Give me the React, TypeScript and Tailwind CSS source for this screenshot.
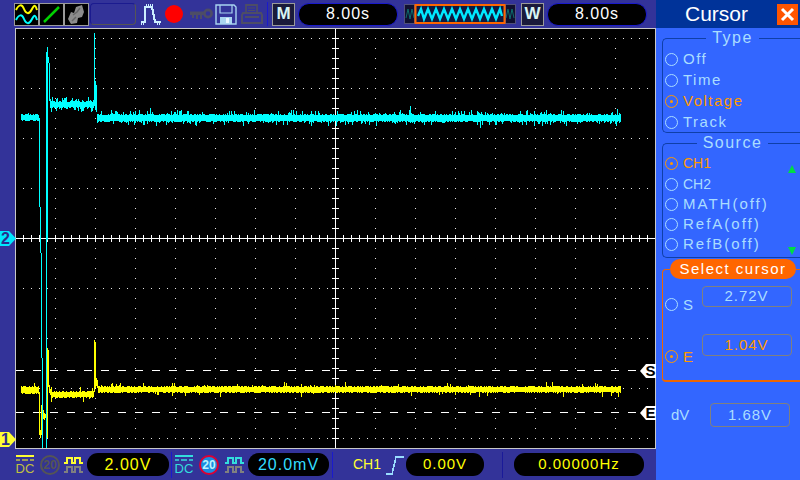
const sans = "font-['Liberation_Sans',Arial,sans-serif]";

// small seeded generator so the trace noise stays the same between renders
function makeRandom(seed: number) {
  let s = seed;
  return () => {
    s = (s * 1664525 + 1013904223) % 4294967296;
    return s / 4294967296;
  };
}

function noiseBand(x0: number, x1: number, top: number, bottom: number, spikes: number, seed: number) {
  const rand = makeRandom(seed);
  let d = '';
  for (let x = x0; x <= x1; x++) {
    let a = top + Math.floor(rand() * 2);
    let b = bottom - Math.floor(rand() * 2);
    if (rand() < spikes) a -= 1 + Math.floor(rand() * 4);
    if (rand() < spikes) b += 1 + Math.floor(rand() * 4);
    d += `M${x + 0.5} ${a}V${b}`;
  }
  return d;
}

const cyanPath =
  noiseBand(21, 38, 114, 121, 0.12, 7) +
  'M39.5 118V207M40.5 207V253M41.5 253V358M42.5 358V448M46.5 52V448M47.5 47V240M48.5 57V63M49.5 63V101' +
  noiseBand(50, 93, 101, 108, 0.35, 21) +
  'M94.5 33V106M95.5 81V110M96.5 85V112' +
  noiseBand(97, 620, 114, 122, 0.22, 93) +
  'M150.5 108V116M410.5 106V116M480.5 118V128M617.5 109V118';

const yellowPath =
  noiseBand(21, 38, 386, 394, 0.04, 5) +
  'M39.5 392V435M40.5 430V438M41.5 405V435M42.5 409V419M43.5 410V419M44.5 413V420M45.5 414V418M47.5 348V438M48.5 350V387M49.5 385V393M50.5 389V395' +
  noiseBand(51, 93, 391, 398, 0.08, 31) +
  'M94.5 340V392M95.5 342V388M96.5 378V386M97.5 380V388' +
  noiseBand(98, 620, 386, 393, 0.06, 57);

function gridDots() {
  const out: { x: number; y: number }[] = [];
  for (let y = 38; y <= 438; y += 50) {
    for (let x = 23; x < 655; x += 8) {
      if ((x - 335) % 40 !== 0 && y !== 238) out.push({ x, y });
    }
  }
  for (let x = 55; x < 655; x += 40) {
    for (let y = 38; y <= 448; y += 10) {
      if (x !== 335) out.push({ x, y });
    }
  }
  return out;
}

function Screen() {
  const ticks = [];
  for (let x = 23; x < 655; x += 8) ticks.push(x);
  const vticks = [];
  for (let y = 38; y < 448; y += 10) vticks.push(y);
  return (
    <svg viewBox="16 29 639 419" className="block w-[639px] h-[419px]" shapeRendering="crispEdges">
      <rect x="16" y="29" width="639" height="419" fill="#000" />
      {gridDots().map((p, i) => (
        <rect key={i} x={p.x} y={p.y} width="1" height="1" fill="#e8e8e8" />
      ))}
      <path d="M16 238.5H655M335.5 29V448" stroke="#fff" strokeWidth="1" />
      {ticks.map((x) => (
        <path key={x} d={`M${x + 0.5} 235V242`} stroke="#fff" />
      ))}
      {vticks.map((y) => (
        <path key={y} d={`M332 ${y + 0.5}H339`} stroke="#fff" />
      ))}
      <path d="M16 370.5H655M16 412.5H655" stroke="#fff" strokeDasharray="8 9" />
      <path d={yellowPath} stroke="#ffff00" fill="none" />
      <path d={cyanPath} stroke="#00ffff" fill="none" />
    </svg>
  );
}

function LeftMarker({ top, label, color }: { top: string; label: string; color: string }) {
  return (
    <div className={`absolute left-0 ${top} w-[16px] h-[15px]`}>
      <svg viewBox="0 0 16 15" className="absolute inset-0 w-[16px] h-[15px]">
        <polygon points="0,0 9,0 16,7.5 9,15 0,15" fill={color} />
      </svg>
      <span className={`absolute left-0 top-0 w-[11px] text-center text-[16px] leading-[15px] font-bold text-[#2b2b8c] ${sans}`}>
        {label}
      </span>
    </div>
  );
}

function RightMarker({ top, label }: { top: string; label: string }) {
  return (
    <div className={`absolute left-[640px] ${top} w-[16px] h-[14px]`}>
      <svg viewBox="0 0 16 14" className="absolute inset-0 w-[16px] h-[14px]">
        <polygon points="0,7 6,0 16,0 16,14 6,14" fill="#fff" />
      </svg>
      <span className={`absolute left-[5px] top-0 w-[11px] text-center text-[15px] leading-[14px] font-bold text-black ${sans}`}>
        {label}
      </span>
    </div>
  );
}

function Pill({ className, text }: { className: string; text: string }) {
  return (
    <div className={`flex items-center justify-center rounded-[11px] bg-black ${sans} ${className}`}>
      {text}
    </div>
  );
}

function WaveIcon() {
  return (
    <svg viewBox="0 0 23 21" className="w-[23px] h-[21px]">
      <path d="M1 6C4 0 7 0 9 5S14 11 17 5 21 3 22 6" stroke="#ffff00" strokeWidth="2" fill="none" />
      <path d="M1 16C4 10 7 10 9 15S14 21 17 15 21 13 22 16" stroke="#00ffff" strokeWidth="2" fill="none" />
    </svg>
  );
}

function LineIcon() {
  return (
    <svg viewBox="0 0 23 21" className="w-[23px] h-[21px]">
      <path d="M4 18L19 3" stroke="#00d000" strokeWidth="2.5" />
    </svg>
  );
}

function BlobIcon() {
  return (
    <svg viewBox="0 0 23 21" className="w-[23px] h-[21px]">
      <path d="M3 15L6 8L9 9L11 3L17 1L19 8L17 13L13 14L12 19L6 20Z" fill="#8c8c8c" />
      <path d="M8 11L12 8L15 4M7 17L11 13" stroke="#666" strokeWidth="1.5" fill="none" />
    </svg>
  );
}

function IconBox({ children }: { children: React.ReactNode }) {
  return (
    <div className="flex h-[21px] w-[23px] items-center justify-center bg-black outline outline-1 outline-[#9a9a9a]">
      {children}
    </div>
  );
}

function TopBar() {
  return (
    <div className="flex h-[28px] items-center pl-[15px]">
      <div className="flex gap-[2px]">
        <IconBox><WaveIcon /></IconBox>
        <IconBox><LineIcon /></IconBox>
        <IconBox><BlobIcon /></IconBox>
      </div>
      <div className="ml-[2px] h-[22px] w-[46px] rounded-[4px] border border-[#1b1b8f] border-b-[#555] border-r-[#555]" />
      <svg viewBox="0 0 22 22" className="ml-[4px] h-[22px] w-[22px]" shapeRendering="crispEdges">
        <path d="M1 19H5V4H12L15 19H21" stroke="#cceeff" strokeWidth="2" fill="none" />
        <path d="M6 1V4M8 1V4M10 1V4M12 1V4M1 18V22M3 18V22M17 18V22M19 18V22" stroke="#cceeff" />
      </svg>
      <div className="ml-[3px] h-[18px] w-[18px] rounded-full bg-[#ff0000]" />
      <svg viewBox="0 0 23 12" className="ml-[7px] h-[12px] w-[23px]">
        <path d="M0 3.5H15V7H12V11H10V7H8V11H6V7H4V10H2V7H0Z" fill="#4d4d66" />
        <circle cx="18" cy="5.5" r="3.6" fill="none" stroke="#4d4d66" strokeWidth="2.6" />
      </svg>
      <svg viewBox="0 0 22 21" className="ml-[2px] h-[21px] w-[22px]">
        <path d="M1 1H19L21 3V20H1Z" fill="none" stroke="#a8d4f0" strokeWidth="1.4" />
        <path d="M5 1V9H17V1" fill="none" stroke="#a8d4f0" strokeWidth="1.2" />
        <rect x="5" y="13" width="12" height="7" fill="#a8d4f0" />
        <rect x="11" y="14" width="3" height="5" fill="#e8f6ff" />
      </svg>
      <svg viewBox="0 0 22 21" className="ml-[4px] h-[21px] w-[22px]">
        <path d="M5 9V1H16V9" fill="none" stroke="#4d4d66" strokeWidth="1.8" />
        <path d="M7 4H14M7 6.5H14" stroke="#4d4d66" strokeWidth="1.2" />
        <path d="M2 9H20L21 11V19H1V11Z" fill="none" stroke="#4d4d66" strokeWidth="2" />
        <path d="M4 13H18" stroke="#4d4d66" strokeWidth="2" />
      </svg>
      <div className="ml-[4px] h-[24px] w-[1px] bg-[#1a1acc]" />
      <div className={`ml-[5px] flex h-[21px] w-[21px] items-center justify-center bg-[#1a1a3a] text-[17px] font-bold text-[#d8f4f4] outline outline-1 outline-[#9a9a9a] ${sans}`}>
        M
      </div>
      <Pill className="ml-[4px] h-[23px] w-[100px] border border-[#1a1acc] text-[16px] tracking-[1px] text-white" text="8.00s" />
      <div className="ml-[6px] flex h-[20px] w-[112px] items-center bg-[#50507a]">
        <svg viewBox="0 0 112 20" className="h-[20px] w-[112px]">
          <rect x="1" y="1" width="9" height="18" fill="#101030" />
          <rect x="102" y="1" width="9" height="18" fill="#101030" />
          <path d="M2 14L4 5L6 15L8 5L10 14M102 14L104 5L106 15L108 5L110 14" stroke="#0c6c6c" fill="none" />
          <rect x="11.5" y="1" width="89" height="18" fill="#0e1a40" stroke="#ff6600" strokeWidth="2" />
          <path d="M14 12L17 5L20 15L24 5L28 15L32 5L36 15L40 5L44 15L48 5L52 15L56 5L60 15L64 5L68 15L72 5L76 15L80 5L84 15L88 5L92 15L96 5L98 12" stroke="#00e8ff" strokeWidth="2.4" fill="none" />
        </svg>
      </div>
      <div className={`ml-[6px] flex h-[21px] w-[21px] items-center justify-center bg-[#1a1a3a] text-[17px] font-bold text-[#d8f4f4] outline outline-1 outline-[#9a9a9a] ${sans}`}>
        W
      </div>
      <Pill className="ml-[4px] h-[23px] w-[100px] border border-[#1a1acc] text-[16px] tracking-[1px] text-white" text="8.00s" />
    </div>
  );
}

function DcIcon({ color, dim }: { color: string; dim: string }) {
  return (
    <div className="flex w-[18px] flex-col items-center">
      <div className="h-[2px] w-[18px]" style={{ background: color }} />
      <svg viewBox="0 0 18 3" className="mt-[2px] h-[3px] w-[18px]">
        <path d="M0 1H4M6 1H12M14 1H18" stroke={dim} strokeWidth="1.5" />
      </svg>
      <span className={`text-[13px] leading-[13px] ${sans}`} style={{ color: dim }}>DC</span>
    </div>
  );
}

function CouplingIcon({ top, bottom }: { top: string; bottom: string }) {
  return (
    <svg viewBox="0 0 19 18" className="h-[18px] w-[19px]" shapeRendering="crispEdges">
      <path d="M0 7H3V2H8V7H11V2H16V7H19" stroke={top} strokeWidth="2" fill="none" />
      <path d="M0 16H3V11H8V16H11V11H16V16H19" stroke={bottom} strokeWidth="2" fill="none" />
    </svg>
  );
}

function BottomBar() {
  return (
    <div className={`flex h-[31px] items-center pl-[16px] ${sans}`}>
      <DcIcon color="#ffff33" dim="#c0c040" />
      <div className="ml-[6px] flex h-[20px] w-[20px] items-center justify-center rounded-full border-2 border-[#555555] text-[12px] font-bold text-[#555555]">
        20
      </div>
      <div className="ml-[4px]">
        <CouplingIcon top="#ffff33" bottom="#808080" />
      </div>
      <Pill className="ml-[4px] h-[23px] w-[82px] text-[16px] tracking-[1px] text-[#ffff00]" text="2.00V" />
      <div className="ml-[2px] h-[26px] w-[1px] bg-[#1a1acc]" />
      <div className="ml-[3px]">
        <DcIcon color="#33dddd" dim="#33dddd" />
      </div>
      <div className="ml-[6px] flex h-[20px] w-[20px] items-center justify-center rounded-full border-2 border-[#dd0033] bg-[#1a8ce0] text-[12px] font-bold text-[#bbf4ff]">
        20
      </div>
      <div className="ml-[6px]">
        <CouplingIcon top="#33dddd" bottom="#808080" />
      </div>
      <Pill className="ml-[4px] h-[23px] w-[81px] text-[16px] tracking-[1px] text-[#33ddff]" text="20.0mV" />
      <div className="ml-[3px] h-[26px] w-[1px] bg-[#1a1acc]" />
      <span className="ml-[20px] text-[14px] text-[#ffff33]">CH1</span>
      <svg viewBox="0 0 18 20" className="ml-[5px] h-[20px] w-[18px]" shapeRendering="crispEdges">
        <path d="M0 19H6L10 2H18" stroke="#99ddff" strokeWidth="1.6" fill="none" />
      </svg>
      <Pill className="ml-[2px] h-[23px] w-[78px] text-[15px] tracking-[1px] text-[#ffff00]" text="0.00V" />
      <div className="ml-[18px] h-[26px] w-[1px] bg-[#1a1a99]" />
      <Pill className="ml-[11px] h-[23px] w-[130px] text-[15px] tracking-[1px] text-[#ffff00]" text="0.00000Hz" />
    </div>
  );
}

function Radio({ on }: { on?: boolean }) {
  return (
    <span className={`flex h-[13px] w-[13px] shrink-0 items-center justify-center rounded-full border ${on ? 'border-[#ff9900]' : 'border-[#aaddff]'}`}>
      {on && <span className="h-[3px] w-[3px] rounded-full bg-[#ff9900]" />}
    </span>
  );
}

function Option({ label, on, text, row }: { label: string; on?: boolean; text?: string; row?: string }) {
  return (
    <div className={`flex items-center gap-[5px] ${row ?? 'h-[21px]'} ${text ?? 'text-[15px] tracking-[1.5px]'} ${on ? 'text-[#ff9900]' : 'text-[#aaddff]'}`}>
      <Radio on={on} />
      <span>{label}</span>
    </div>
  );
}

function ValueBox({ text, on, className }: { text: string; on?: boolean; className: string }) {
  return (
    <div className={`flex items-center justify-center rounded-[4px] border border-[#808080] text-[15px] tracking-[1px] ${on ? 'text-[#ff9900]' : 'text-[#aaddff]'} ${className}`}>
      {text}
    </div>
  );
}

function CursorPanel() {
  return (
    <div className={`flex h-[480px] w-[144px] flex-col bg-[#3366ff] ${sans}`}>
      <div className="flex h-[28px] shrink-0 items-center bg-[#003399] pr-[2px]">
        <span className="flex-1 text-center text-[21px] text-white">Cursor</span>
        <div className="flex h-[21px] w-[21px] items-center justify-center bg-[#ff5500]">
          <svg viewBox="0 0 15 15" className="h-[15px] w-[15px]">
            <path d="M2 2L13 13M13 2L2 13" stroke="#fff" strokeWidth="3" />
          </svg>
        </div>
      </div>
      <fieldset className="ml-[6px] mt-[1px] h-[104px] rounded-bl-[5px] rounded-tl-[5px] border border-r-0 border-[#0f3fa8] pl-[2px]">
        <legend className="mx-auto px-[6px] text-[16px] leading-[18px] tracking-[1.5px] text-[#aaddff]">Type</legend>
        <div className="mt-[2px]">
          <Option label="Off" />
          <Option label="Time" />
          <Option label="Voltage" on />
          <Option label="Track" />
        </div>
      </fieldset>
      <fieldset className="relative ml-[6px] mt-[1px] h-[124px] rounded-bl-[5px] rounded-tl-[5px] border border-r-0 border-[#0f3fa8] pl-[2px]">
        <legend className="mx-auto px-[6px] text-[16px] leading-[18px] tracking-[1.5px] text-[#aaddff]">Source</legend>
        <div className="mt-[1px]">
          <Option label="CH1" on text="text-[14px]" />
          <Option label="CH2" text="text-[14px]" row="h-[20px]" />
          <Option label="MATH(off)" text="text-[15px] tracking-[2px]" row="h-[20px]" />
          <Option label="RefA(off)" text="text-[15px] tracking-[2px]" row="h-[20px]" />
          <Option label="RefB(off)" text="text-[15px] tracking-[2px]" row="h-[20px]" />
        </div>
        <svg viewBox="0 0 8 8" className="absolute right-[4px] top-[13px] h-[8px] w-[8px]">
          <polygon points="4,0 8,8 0,8" fill="#00dd44" />
        </svg>
        <svg viewBox="0 0 8 8" className="absolute right-[4px] top-[95px] h-[8px] w-[8px]">
          <polygon points="0,0 8,0 4,8" fill="#00dd44" />
        </svg>
      </fieldset>
      <fieldset className="ml-[6px] mt-[1px] h-[123px] rounded-bl-[4px] rounded-tl-[4px] border border-r-0 border-b-2 border-[#ee6600] pl-[2px]">
        <legend className="ml-[5px] flex h-[20px] w-[126px] items-center justify-center rounded-[10px] bg-[#ff6600] text-[15px] tracking-[1.5px] text-white">
          Select cursor
        </legend>
        <div className="mt-[7px] flex h-[30px] items-end">
          <div className="flex items-center gap-[5px] text-[15px] tracking-[1.5px] text-[#aaddff]">
            <Radio />
            <span>S</span>
          </div>
          <ValueBox text="2.72V" className="ml-[7px] h-[21px] w-[90px] self-start" />
        </div>
        <div className="mt-[18px] flex h-[34px] items-end">
          <div className="flex items-center gap-[5px] text-[15px] tracking-[1.5px] text-[#ff9900]">
            <Radio on />
            <span>E</span>
          </div>
          <ValueBox text="1.04V" on className="ml-[7px] h-[22px] w-[90px] self-start" />
        </div>
      </fieldset>
      <div className="ml-[15px] mt-[21px] flex h-[24px] items-center text-[15px] text-[#aaddff]">
        <span className="w-[39px]">dV</span>
        <ValueBox text="1.68V" className="h-[24px] w-[80px]" />
      </div>
    </div>
  );
}

export default function App() {
  return (
    <div className="relative flex h-[480px] w-[800px] overflow-hidden bg-[#333399]">
      <div className="flex w-[656px] flex-col">
        <TopBar />
        <div className="ml-[15px] w-[641px] border border-[#c8c8c8]">
          <Screen />
        </div>
        <BottomBar />
      </div>
      <CursorPanel />
      <LeftMarker top="top-[231px]" label="2" color="#00e8ff" />
      <LeftMarker top="top-[432px]" label="1" color="#ffff33" />
      <RightMarker top="top-[364px]" label="S" />
      <RightMarker top="top-[406px]" label="E" />
    </div>
  );
}
